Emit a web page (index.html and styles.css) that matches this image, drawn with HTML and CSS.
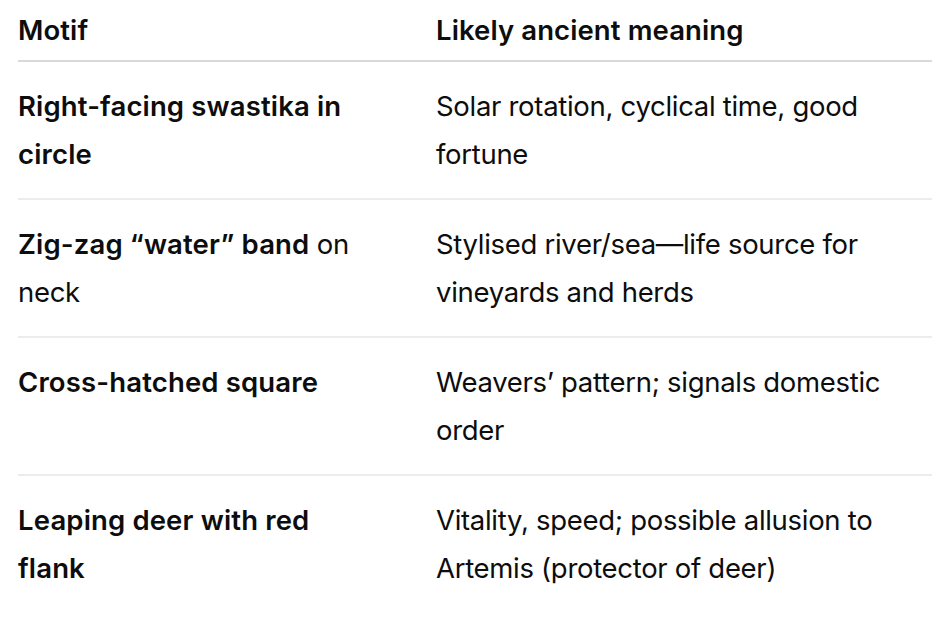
FILE: index.html
```html
<!DOCTYPE html>
<html lang="en">
<head>
<meta charset="utf-8">
<title>Motifs</title>
<link rel="stylesheet" href="styles.css">
</head>
<body>
<table class="motifs">
  <thead>
    <tr>
      <th class="col-motif">Motif</th>
      <th class="col-meaning">Likely ancient meaning</th>
    </tr>
  </thead>
  <tbody>
    <tr>
      <td class="motif"><strong>Right-facing swastika in circle</strong></td>
      <td class="meaning">Solar rotation, cyclical time, good fortune</td>
    </tr>
    <tr>
      <td class="motif"><strong>Zig-zag “water” band</strong> on neck</td>
      <td class="meaning">Stylised river/sea—life source for vineyards and herds</td>
    </tr>
    <tr>
      <td class="motif"><strong>Cross-hatched square</strong></td>
      <td class="meaning">Weavers’ pattern; signals domestic order</td>
    </tr>
    <tr>
      <td class="motif"><strong>Leaping deer with red flank</strong></td>
      <td class="meaning">Vitality, speed; possible allusion to Artemis (protector of deer)</td>
    </tr>
  </tbody>
</table>
</body>
</html>
```
FILE: styles.css
```css
html, body {
  margin: 0;
  padding: 0;
  background: #ffffff;
}

body {
  font-family: Inter, "Noto Sans", sans-serif;
  font-size: 27.5px;
  line-height: 48px;
  color: #0d0d0d;
  letter-spacing: -0.3px;
}

.motifs {
  margin-left: 18px;
  width: 914px;
  border-collapse: collapse;
  table-layout: fixed;
}

.motifs th {
  text-align: left;
  font-weight: 600;
  letter-spacing: 0.1px;
  padding: 6px 0;
  border-bottom: 2px solid #d9d9d9;
  vertical-align: top;
}

.col-motif {
  width: 418px;
}

.motifs td {
  padding: 20px 0;
  vertical-align: top;
  border-bottom: 2px solid #ececec;
}

.motifs td.motif {
  padding-right: 60px;
}

.motifs td.meaning {
  padding-right: 20px;
}

.motifs tbody tr:last-child td {
  border-bottom: none;
}

.motifs strong {
  font-weight: 600;
  letter-spacing: 0.15px;
}
```
